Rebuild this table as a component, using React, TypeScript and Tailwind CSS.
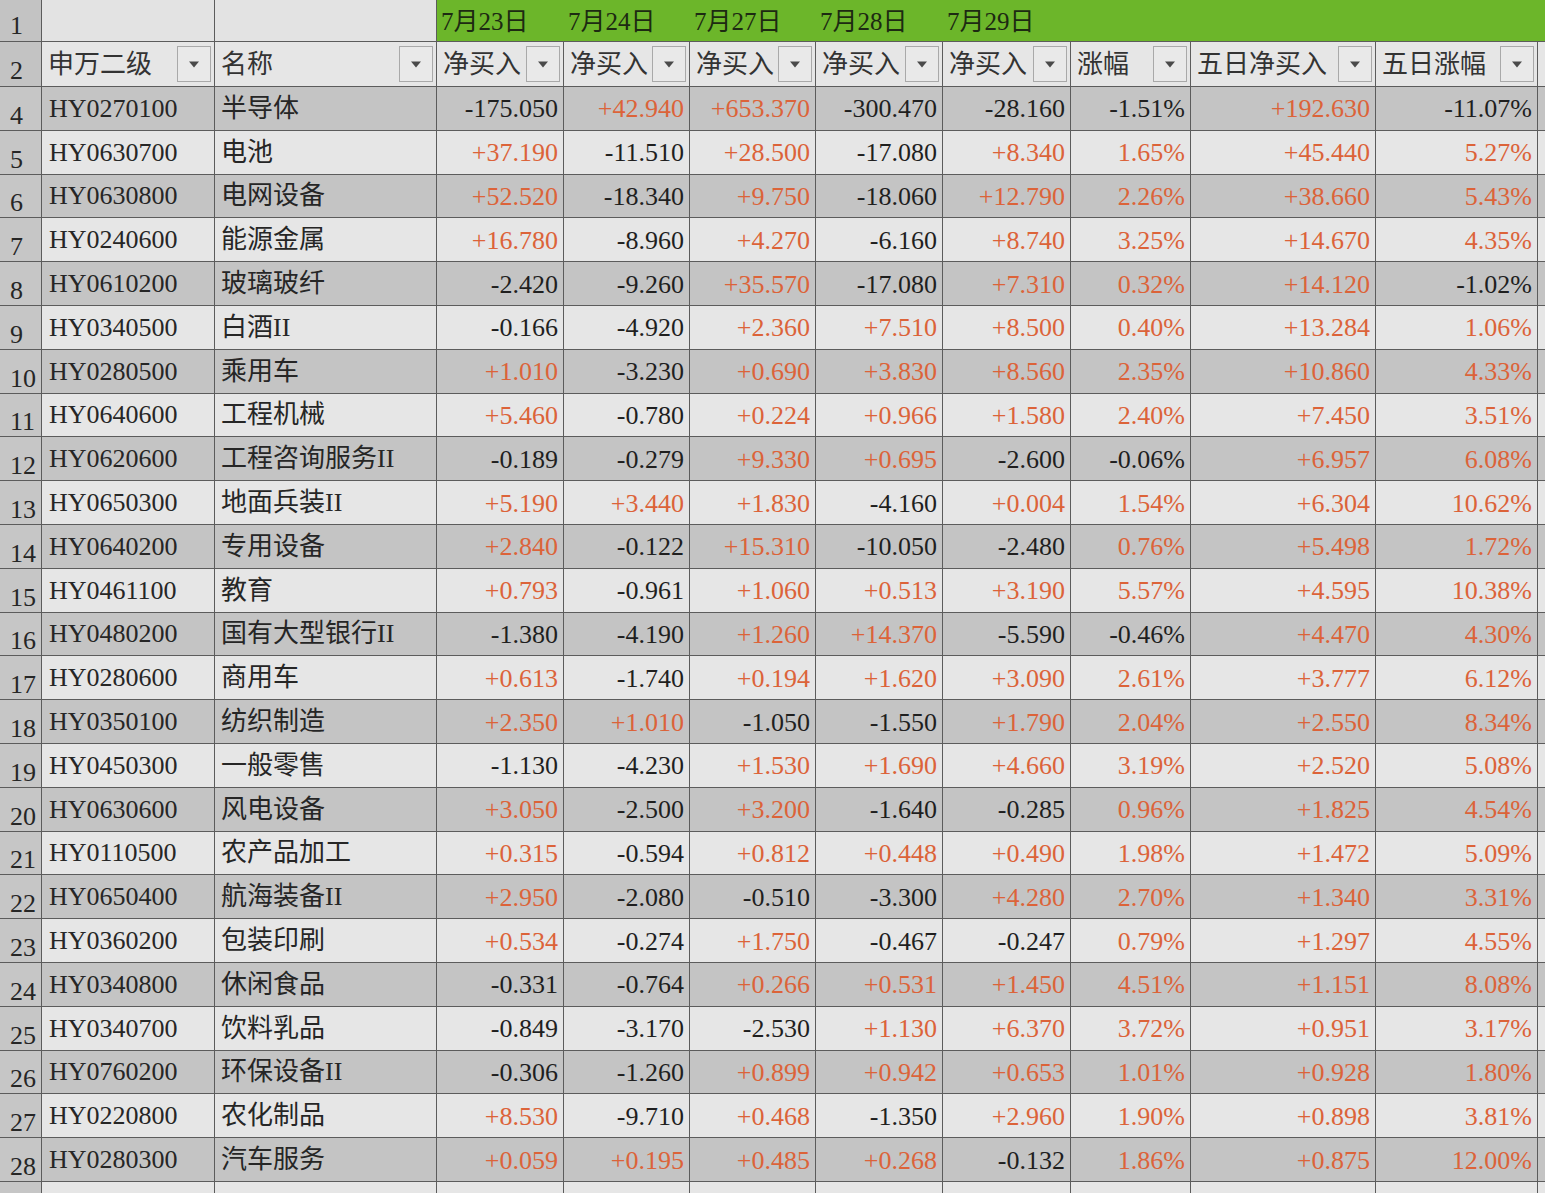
import React from "react";

type Row = [string, string, string, string, string, string, string, string, string, string];

const data: Row[] = [
  ["HY0270100", "半导体", "-175.050", "+42.940", "+653.370", "-300.470", "-28.160", "-1.51%", "+192.630", "-11.07%"],
  ["HY0630700", "电池", "+37.190", "-11.510", "+28.500", "-17.080", "+8.340", "1.65%", "+45.440", "5.27%"],
  ["HY0630800", "电网设备", "+52.520", "-18.340", "+9.750", "-18.060", "+12.790", "2.26%", "+38.660", "5.43%"],
  ["HY0240600", "能源金属", "+16.780", "-8.960", "+4.270", "-6.160", "+8.740", "3.25%", "+14.670", "4.35%"],
  ["HY0610200", "玻璃玻纤", "-2.420", "-9.260", "+35.570", "-17.080", "+7.310", "0.32%", "+14.120", "-1.02%"],
  ["HY0340500", "白酒II", "-0.166", "-4.920", "+2.360", "+7.510", "+8.500", "0.40%", "+13.284", "1.06%"],
  ["HY0280500", "乘用车", "+1.010", "-3.230", "+0.690", "+3.830", "+8.560", "2.35%", "+10.860", "4.33%"],
  ["HY0640600", "工程机械", "+5.460", "-0.780", "+0.224", "+0.966", "+1.580", "2.40%", "+7.450", "3.51%"],
  ["HY0620600", "工程咨询服务II", "-0.189", "-0.279", "+9.330", "+0.695", "-2.600", "-0.06%", "+6.957", "6.08%"],
  ["HY0650300", "地面兵装II", "+5.190", "+3.440", "+1.830", "-4.160", "+0.004", "1.54%", "+6.304", "10.62%"],
  ["HY0640200", "专用设备", "+2.840", "-0.122", "+15.310", "-10.050", "-2.480", "0.76%", "+5.498", "1.72%"],
  ["HY0461100", "教育", "+0.793", "-0.961", "+1.060", "+0.513", "+3.190", "5.57%", "+4.595", "10.38%"],
  ["HY0480200", "国有大型银行II", "-1.380", "-4.190", "+1.260", "+14.370", "-5.590", "-0.46%", "+4.470", "4.30%"],
  ["HY0280600", "商用车", "+0.613", "-1.740", "+0.194", "+1.620", "+3.090", "2.61%", "+3.777", "6.12%"],
  ["HY0350100", "纺织制造", "+2.350", "+1.010", "-1.050", "-1.550", "+1.790", "2.04%", "+2.550", "8.34%"],
  ["HY0450300", "一般零售", "-1.130", "-4.230", "+1.530", "+1.690", "+4.660", "3.19%", "+2.520", "5.08%"],
  ["HY0630600", "风电设备", "+3.050", "-2.500", "+3.200", "-1.640", "-0.285", "0.96%", "+1.825", "4.54%"],
  ["HY0110500", "农产品加工", "+0.315", "-0.594", "+0.812", "+0.448", "+0.490", "1.98%", "+1.472", "5.09%"],
  ["HY0650400", "航海装备II", "+2.950", "-2.080", "-0.510", "-3.300", "+4.280", "2.70%", "+1.340", "3.31%"],
  ["HY0360200", "包装印刷", "+0.534", "-0.274", "+1.750", "-0.467", "-0.247", "0.79%", "+1.297", "4.55%"],
  ["HY0340800", "休闲食品", "-0.331", "-0.764", "+0.266", "+0.531", "+1.450", "4.51%", "+1.151", "8.08%"],
  ["HY0340700", "饮料乳品", "-0.849", "-3.170", "-2.530", "+1.130", "+6.370", "3.72%", "+0.951", "3.17%"],
  ["HY0760200", "环保设备II", "-0.306", "-1.260", "+0.899", "+0.942", "+0.653", "1.01%", "+0.928", "1.80%"],
  ["HY0220800", "农化制品", "+8.530", "-9.710", "+0.468", "-1.350", "+2.960", "1.90%", "+0.898", "3.81%"],
  ["HY0280300", "汽车服务", "+0.059", "+0.195", "+0.485", "+0.268", "-0.132", "1.86%", "+0.875", "12.00%"],
];

const GRID =
  "grid grid-cols-[42px_173px_222px_127px_126px_126px_127px_128px_120px_185px_162px_1fr]";
const FONT = { fontFamily: "'Liberation Serif', 'Noto Sans CJK SC', serif" };
const LINE = "border-[#5c5c5c]";

function FilterBtn() {
  return (
    <div className="ml-auto mr-[3px] flex h-[36px] w-[34px] shrink-0 items-center justify-center border border-[#a9a9a9] bg-[#e9e9e9]">
      <svg width="12" height="7" viewBox="0 0 12 7">
        <path d="M1 0.5 L11 0.5 L6 6.5 Z" fill="#4a4a4a" />
      </svg>
    </div>
  );
}

function isRed(v: string) {
  return !v.startsWith("-");
}

export default function App() {
  const headers = ["申万二级", "名称", "净买入", "净买入", "净买入", "净买入", "净买入", "涨幅", "五日净买入", "五日涨幅"];
  const dates = ["7月23日", "7月24日", "7月27日", "7月28日", "7月29日"];
  return (
    <div
      className="h-[1193px] w-[1545px] overflow-hidden bg-[#e4e4e4] text-[#262626]"
      style={FONT}
    >
      {/* Row 1 */}
      <div className={`${GRID} h-[42px] border-b-[1.5px] ${LINE}`}>
        <div className={`flex items-end bg-[#c3c3c3] pb-[2px] pl-[10px] text-[26px] leading-none border-r-[1.5px] ${LINE}`}>1</div>
        <div className={`bg-[#e3e3e3] border-r-[1.5px] ${LINE}`} />
        <div className={`bg-[#e3e3e3] border-r-[1.5px] ${LINE}`} />
        {dates.map((d) => (
          <div key={d} className="flex items-center bg-[#6cb62a] pl-[4px] pt-[2px] text-[25px] leading-none text-[#1d2a12]">
            {d}
          </div>
        ))}
        <div className="col-span-4 bg-[#6cb62a]" />
      </div>
      {/* Row 2 */}
      <div className={`${GRID} h-[45px] border-b-[1.5px] ${LINE}`}>
        <div className={`flex items-end bg-[#c3c3c3] pb-[2px] pl-[10px] text-[26px] leading-none border-r-[1.5px] ${LINE}`}>2</div>
        {headers.map((h, i) => (
          <div key={i} className={`flex items-center bg-[#e6e6e6] pl-[6px] text-[26px] leading-none text-[#333] border-r-[1.5px] ${LINE}`}>
            <span className="whitespace-nowrap pt-[2px]">{h}</span>
            <FilterBtn />
          </div>
        ))}
        <div className="bg-[#e6e6e6]" />
      </div>
      {/* Data rows */}
      {data.map((r, idx) => {
        const gray = idx % 2 === 0;
        const bg = gray ? "bg-[#c4c4c4]" : "bg-[#e6e6e6]";
        return (
          <div key={r[0]} className={`${GRID} h-[43.8px] border-b-[1.5px] ${LINE}`}>
            <div className={`flex items-end whitespace-nowrap bg-[#c6c6c6] pb-[1px] pl-[10px] text-[26px] leading-none border-r-[1.5px] ${LINE}`}>
              {idx + 4}
            </div>
            <div className={`flex items-center ${bg} pl-[7px] pt-[1px] text-[26px] leading-none border-r-[1.5px] ${LINE}`}>{r[0]}</div>
            <div className={`flex items-center whitespace-nowrap ${bg} pl-[6px] pt-[1px] text-[26px] leading-none border-r-[1.5px] ${LINE}`}>{r[1]}</div>
            {r.slice(2).map((v, j) => (
              <div
                key={j}
                className={`flex items-center justify-end ${bg} pr-[5px] pt-[2px] text-[26px] leading-none border-r-[1.5px] ${LINE} ${
                  isRed(v) ? "text-[#dc6339]" : "text-[#1f1f1f]"
                }`}
              >
                {v}
              </div>
            ))}
            <div className={bg} />
          </div>
        );
      })}
      {/* Partial row 29 */}
      <div className={`${GRID} h-[20px]`}>
        <div className={`bg-[#c6c6c6] border-r-[1.5px] ${LINE}`} />
        {Array.from({ length: 10 }).map((_, i) => (
          <div key={i} className={`bg-[#e6e6e6] border-r-[1.5px] ${LINE}`} />
        ))}
        <div className="bg-[#e6e6e6]" />
      </div>
    </div>
  );
}
